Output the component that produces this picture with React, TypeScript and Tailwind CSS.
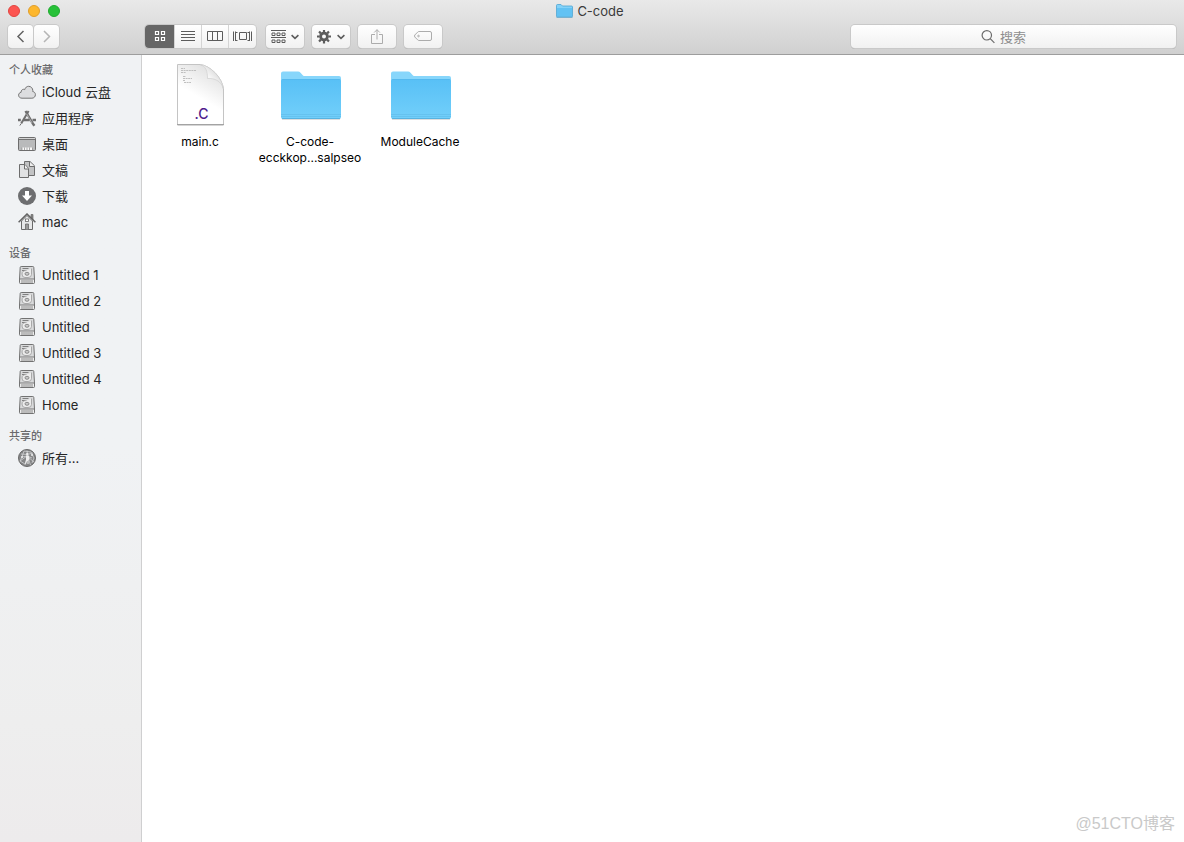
import React from "react";

const toolButton =
  "flex h-[23px] items-center justify-center rounded-[4px] bg-linear-to-b from-white to-[#f1f1f1] text-[#5c5c5c] shadow-[0_0_0_1px_#c9c9c9,0_1px_0_0_#a8a8a8]";

function Chevron() {
  return (
    <svg className="h-2 w-2" viewBox="0 0 8 8" fill="none" stroke="currentColor" strokeWidth="1.6" aria-hidden="true">
      <path d="M0.600 2.200 4 5.400 7.400 2.200" />
    </svg>
  );
}

function CloudIcon() {
  return (
    <svg className="h-[18px] w-[18px]" viewBox="0 0 18 18" aria-hidden="true">
      <path
        d="M4 15.200C2 15.200.6 13.900.6 12.200c0-1.600 1.100-2.700 2.500-2.900-.1-1.700 1-3 2.400-3 .5 0 .9.1 1.200.4C7.300 4.500 8.800 3.300 10.600 3.300c2.400 0 4.200 1.900 4.200 4.300 0 .3 0 .6-.1.900 1.600.2 2.700 1.500 2.700 3.200 0 2-1.500 3.500-3.500 3.500Z"
        fill="#dcdddf"
        stroke="#747474"
        strokeWidth="1"
      />
    </svg>
  );
}

function AppsIcon() {
  return (
    <svg className="h-[18px] w-[18px]" viewBox="0 0 18 18" fill="none" stroke="#6f6f6f" aria-hidden="true">
      <path d="M10.600 2 3.200 14.600" strokeWidth="2" />
      <path d="M3 14.800 1.800 16.600" strokeWidth="1" />
      <path d="M7.500 2 15 14.800l1.400 2" strokeWidth="2.400" />
      <path d="M8.600 4.800 14 14" stroke="#c9cacb" strokeWidth=".7" />
      <path d="M0 11h2.800M5.500 11h6.200M14.500 11H18" strokeWidth="2.400" />
    </svg>
  );
}

function DesktopIcon() {
  return (
    <svg className="h-[18px] w-[18px]" viewBox="0 0 18 18" aria-hidden="true">
      <rect x=".5" y="2.500" width="17" height="13" rx="1" fill="#b9babb" stroke="#6d6d6d" />
      <path d="M1 4.500h16" stroke="#737373" />
      <path d="M1 3.500h16" stroke="#dedede" strokeWidth=".7" />
      <path d="M4 12.500h10.500v2.500H4z" fill="#f8f8f8" />
      <path d="M4 12.500v2.500M6.500 12.500v2.500M9 12.500v2.500M11.500 12.500v2.500M14.500 12.500v2.500" stroke="#888" strokeWidth=".7" />
    </svg>
  );
}

function DocumentsIcon() {
  return (
    <svg className="h-[18px] w-[18px]" viewBox="0 0 18 18" fill="#e1e2e3" stroke="#6d6d6d" aria-hidden="true">
      <path d="M6.500 .5H12l4.500 4.300v9.700h-10z" fill="#c2c3c4" />
      <path d="M11.500 .8v4.700h5" fill="#eee" />
      <path d="M1.500 3.500H7l3.500 4V16.500h-9z" />
      <path d="M6.500 3.700v4.300h4" fill="#f3f3f3" />
    </svg>
  );
}

function DownloadsIcon() {
  return (
    <svg className="h-[18px] w-[18px]" viewBox="0 0 18 18" aria-hidden="true">
      <circle cx="9" cy="9" r="9" fill="#6d6e70" />
      <path d="M7 4h4v4.500h3L9 14 4 8.500h3z" fill="#fff" />
    </svg>
  );
}

function HomeIcon() {
  return (
    <svg className="h-[18px] w-[18px]" viewBox="0 0 18 18" aria-hidden="true">
      <path d="M3.500 8 9 2.500 14.500 8v8.500h-11z" fill="#e6e7e8" stroke="#696969" />
      <path d="M13 1.500h2v5.500l-2-2z" fill="#888" stroke="#696969" strokeWidth=".7" />
      <path d="M.6 9.300 9 1l8.400 8.300" fill="none" stroke="#646464" strokeWidth="1.500" />
      <rect x="7.500" y="6" width="3" height="2.500" fill="#fff" stroke="#666" strokeWidth=".8" />
      <path d="M7.500 16.500v-5.500h3v5.500" fill="#9a9a9a" stroke="#696969" strokeWidth=".8" />
    </svg>
  );
}

function DiskIcon() {
  return (
    <svg className="h-[18px] w-[18px]" viewBox="0 0 18 18" aria-hidden="true">
      <path d="M3.200 .5h11.600q.9 0 1 .9l.7 11.600v3.600q0 .9-.9.900H2.400q-.9 0-.9-.9V13l.7-11.600q.1-.9 1-.9Z" fill="#d9dadb" stroke="#727272" />
      <path d="M2 13h14v4H2z" fill="#ededed" />
      <path d="M1.500 13h15" stroke="#777" />
      <path d="M4 14v3M6 14v3M8 14v3M10 14v3M12 14v3M14 14v3" stroke="#808080" strokeWidth=".9" />
      <path d="M4.500 2.500h6M4 4.500h3" stroke="#808080" />
      <path d="M13.500 2.500v6q0 3-3.500 3H7q-3 0-3-3.500 0-3.500 4.500-3.500" fill="#ececec" stroke="#999" strokeWidth=".8" />
      <ellipse cx="9" cy="7.800" rx="2" ry="1.500" fill="#c9c9c9" stroke="#777" strokeWidth=".8" />
    </svg>
  );
}

function NetworkIcon() {
  return (
    <svg className="h-[18px] w-[18px]" viewBox="0 0 18 18" aria-hidden="true">
      <circle cx="9" cy="9" r="8.500" fill="#858687" stroke="#696969" />
      <g fill="none" stroke="#d9dadb" strokeWidth=".7">
        <path d="M3 5 9 5.500 15 4M2 12l7-5 7 6M9 1.500 9.500 7 7 16M9.500 7l3 9M6 2 4 8l-2 4 5 3M6 2l7 1 3 6-2 5M4 8l5-1 5 2" />
      </g>
      <g fill="#eee">
        <circle cx="9.300" cy="5" r="1.200" />
        <path d="M8 6.500h3l.5 4-1 .5v4H9.500v-3h-.5l-1 3-1-.5 1-3.500Z" />
        <circle cx="4" cy="8" r="1" />
        <circle cx="14" cy="6" r="1" />
      </g>
    </svg>
  );
}

function FolderIcon({ id }: { id: string }) {
  return (
    <svg className="h-16 w-16" viewBox="0 0 64 64" aria-hidden="true">
      <defs>
        <linearGradient id={id} x1="0" y1="0" x2="0" y2="1">
          <stop offset="0" stopColor="#58c0f6" />
          <stop offset="1" stopColor="#72cffa" />
        </linearGradient>
      </defs>
      <path d="M4 56.500h58" stroke="#000" strokeOpacity=".13" />
      <path d="M3 10.500Q3 8.500 5 8.500H20Q21.500 8.500 22.500 9.800L25 12.500Q25.500 13 27 13H61Q63 13 63 15V54H3Z" fill="#87d6fb" />
      <path d="M3 18q0-2 2-2h56q2 0 2 2v36q0 2-2 2H5q-2 0-2-2Z" fill={`url(#${id})`} />
      <path d="M4 16.500h58" stroke="#50afe3" strokeOpacity=".4" />
      <path d="M3 51.500h60M3 53.500h60" stroke="#58b4e2" strokeOpacity=".45" />
      <path d="M4 55.500h58" stroke="#4fa9d8" strokeOpacity=".75" />
    </svg>
  );
}

function SourceFileIcon() {
  return (
    <svg className="h-16 w-16" viewBox="0 0 64 64" aria-hidden="true">
      <defs>
        <linearGradient id="page" x1="0" y1="1" x2=".45" y2="0">
          <stop offset=".55" stopColor="#fff" />
          <stop offset="1" stopColor="#e4e4e4" />
        </linearGradient>
        <linearGradient id="curl" x1="0" y1="1" x2="1" y2="0">
          <stop offset=".1" stopColor="#fff" />
          <stop offset=".45" stopColor="#f6f6f6" />
          <stop offset="1" stopColor="#bdbdbd" />
        </linearGradient>
      </defs>
      <path d="M9.500 62.500h46" stroke="#888" strokeOpacity=".35" />
      <path d="M9.500 1.500H32C42 2.500 54 14 55.500 26V61.500h-46Z" fill="url(#page)" stroke="#c4c4c4" />
      <path d="M32 1.500C38 3.500 39.500 8 39.500 15.500c7-.5 14 2.500 16 10.500C54 14 42 2.500 32 1.500Z" fill="url(#curl)" stroke="#cfcfcf" strokeWidth=".7" />
      <path d="M9 61.500h47" stroke="#a3a3a3" />
      <path d="M13 5.500h4M13 7.500h15M13 9.500h5M15 13.500h3M15 15.500h9M15 17.500h2M16 19.500h7" stroke="#b9b9b9" strokeWidth=".9" strokeDasharray="2 .6" />
      <text x="26.500" y="56" fontFamily="Inter, sans-serif" fontWeight="500" fontSize="14" fill="#4f1c8c">.C</text>
    </svg>
  );
}

type Item = { name: string; icon: () => React.JSX.Element };

const sections: { title: string; items: Item[] }[] = [
  {
    title: "个人收藏",
    items: [
      { name: "iCloud 云盘", icon: CloudIcon },
      { name: "应用程序", icon: AppsIcon },
      { name: "桌面", icon: DesktopIcon },
      { name: "文稿", icon: DocumentsIcon },
      { name: "下载", icon: DownloadsIcon },
      { name: "mac", icon: HomeIcon },
    ],
  },
  {
    title: "设备",
    items: ["Untitled 1", "Untitled 2", "Untitled", "Untitled 3", "Untitled 4", "Home"].map((name) => ({
      name,
      icon: DiskIcon,
    })),
  },
  { title: "共享的", items: [{ name: "所有...", icon: NetworkIcon }] },
];

function TitleBar() {
  return (
    <div className="flex h-[22px] items-center px-2">
      <div className="flex flex-1 gap-2">
        <button aria-label="关闭" className="h-3 w-3 rounded-full border border-[#e2443f] bg-[#fc5551]" />
        <button aria-label="最小化" className="h-3 w-3 rounded-full border border-[#e09e2b] bg-[#fdb72d]" />
        <button aria-label="缩放" className="h-3 w-3 rounded-full border border-[#1fab2e] bg-[#27c138]" />
      </div>
      <h1 className="flex items-center gap-1 pr-1 text-[13px] leading-4 text-[#3a3a3a]">
        <svg className="h-4 w-[17px]" viewBox="0 0 17 16" aria-hidden="true">
          <path d="M.5 2.500q0-1 1-1h3.500l1.500 1.500h9q1 0 1 1v9.500H.5Z" fill="#83d2f9" stroke="#4da4d2" strokeWidth=".8" />
          <path d="M1 5h15v8.500H1z" fill="#62c2f3" />
          <path d="M.5 14.500h16" stroke="#4b9cc8" strokeOpacity=".7" />
        </svg>
        C-code
      </h1>
      <div className="flex-1" />
    </div>
  );
}

function Toolbar() {
  return (
    <div className="flex items-center px-2 pt-[3px] pb-[6px]">
      <div className="flex gap-px">
        <button aria-label="后退" className={`${toolButton} w-[25px]`}>
          <svg className="h-3.5 w-3.5" viewBox="0 0 14 14" fill="none" stroke="#626262" strokeWidth="1.500" aria-hidden="true">
            <path d="M9.500 1 4 6.500l5.500 5.500" />
          </svg>
        </button>
        <button aria-label="前进" className={`${toolButton} w-[25px]`}>
          <svg className="h-3.5 w-3.5" viewBox="0 0 14 14" fill="none" stroke="#b5b5b5" strokeWidth="1.500" aria-hidden="true">
            <path d="M4 1 9.500 6.500 4 12" />
          </svg>
        </button>
      </div>

      <div className="ml-[86px] flex h-[23px] divide-x divide-[#d4d4d4] overflow-hidden rounded-[4px] bg-linear-to-b from-white to-[#f1f1f1] text-[#5c5c5c] shadow-[0_0_0_1px_#c9c9c9,0_1px_0_0_#a8a8a8]">
        <button aria-label="图标视图" className="flex w-[30px] items-center justify-center bg-[#666] text-white">
          <svg className="h-3 w-3" viewBox="0 0 12 12" fill="none" stroke="currentColor" strokeWidth="1.200" aria-hidden="true">
            <path d="M1.500 .5h3v3h-3zM7.500 .5h3v3h-3zM1.500 6.500h3v3h-3zM7.500 6.500h3v3h-3z" />
          </svg>
        </button>
        <button aria-label="列表视图" className="flex w-[27px] items-center justify-center">
          <svg className="h-3 w-3.5" viewBox="0 0 14 12" stroke="currentColor" aria-hidden="true">
            <path d="M0 .5h14M0 3.500h14M0 6.500h14M0 9.500h14" />
          </svg>
        </button>
        <button aria-label="分栏视图" className="flex w-[27px] items-center justify-center">
          <svg className="h-3 w-4" viewBox="0 0 16 12" fill="none" stroke="currentColor" aria-hidden="true">
            <path d="M.5 .5h15v9H.5zM5.500 .5v9M10.500 .5v9" />
          </svg>
        </button>
        <button aria-label="Cover Flow 视图" className="flex w-[27px] items-center justify-center">
          <svg className="h-3 w-[19px] shrink-0" viewBox="0 0 19 12" fill="none" stroke="currentColor" aria-hidden="true">
            <path d="M.5 .5v9.500M18.500 .5v9.500M6.500 1.500h7v7h-7zM2.500 .5v9.500M16.500 .5v9.500M3 1.500h1.500M3 9.500h1.500M16 1.500h-1.500M16 9.500h-1.500" />
          </svg>
        </button>
      </div>

      <div className="ml-[10px] flex gap-2">
        <button aria-label="排列方式" className={`${toolButton} w-[38px] gap-1`}>
          <svg className="h-3.5 w-4" viewBox="0 0 16 14" fill="none" stroke="currentColor" aria-hidden="true">
            <path d="M0 .5h15M0 7.500h15" />
            <path d="M1 3h3v2.500H1zM6 3h3v2.500H6zM11 3h3v2.500h-3zM1 10h3v2.500H1zM6 10h3v2.500H6zM11 10h3v2.500h-3z" />
          </svg>
          <Chevron />
        </button>
        <button aria-label="操作" className={`${toolButton} w-[38px] gap-1.5`}>
          <svg className="h-3.5 w-3.5" viewBox="0 0 14 14" fill="none" stroke="currentColor" aria-hidden="true">
            <circle cx="7" cy="6.500" r="3.400" strokeWidth="2.800" />
            <path
              d="M7-.5v2.600M7 10.900v2.600M0 6.500h2.600M11.400 6.500H14M2.050 1.550l1.800 1.800M10.150 9.650l1.800 1.800M2.050 11.450l1.800-1.800M10.150 3.350l1.800-1.800"
              strokeWidth="2.200"
            />
          </svg>
          <Chevron />
        </button>
        <button aria-label="共享" className={`${toolButton} w-[38px]`}>
          <svg className="h-4 w-3" viewBox="0 0 12 16" fill="none" stroke="#acacac" aria-hidden="true">
            <path d="M4 5.500H.5v9h11v-9H8M6 10.500V.7M3.200 3.500 6 .7l2.800 2.800" />
          </svg>
        </button>
        <button aria-label="标记" className={`${toolButton} w-[38px]`}>
          <svg className="h-3 w-[18px]" viewBox="0 0 18 12" fill="none" stroke="#acacac" aria-hidden="true">
            <path d="M5 .5h11q1.500 0 1.500 1.500v6q0 1.500-1.500 1.500H5q-.8 0-1.300-.6L.8 6q-.6-1 0-2l2.900-2.900Q4.200 .5 5 .5Z" />
            <circle cx="4.500" cy="5" r=".8" />
          </svg>
        </button>
      </div>

      <label className="ml-auto flex h-[23px] w-[325px] cursor-text items-center justify-center gap-[5px] rounded-[4px] bg-linear-to-b from-white to-[#f1f1f1] shadow-[0_0_0_1px_#c9c9c9,0_1px_0_0_#a8a8a8]">
        <svg className="h-3.5 w-3.5" viewBox="0 0 14 14" fill="none" stroke="#6b6b6b" strokeWidth="1.200" aria-hidden="true">
          <circle cx="5.800" cy="5.300" r="4.700" />
          <path d="m9.200 8.700 4.200 4.200" />
        </svg>
        <input
          type="search"
          aria-label="搜索"
          placeholder="搜索"
          className="h-4 w-[46px] bg-transparent text-[13px] leading-4 text-[#333] outline-none placeholder:text-[#8e8e8e]"
        />
      </label>
    </div>
  );
}

function Sidebar() {
  return (
    <nav className="flex w-[142px] shrink-0 flex-col gap-[9px] border-r border-[#cfcfd0] bg-linear-to-b from-[#f0f2f4] from-50% via-[#eeeeee] via-85% to-[#edebec] pt-[6px]">
      {sections.map((section) => (
        <section key={section.title}>
          <h2 className="pl-[9px] text-[11px] leading-[18px] font-medium text-[#6a6a6c]">{section.title}</h2>
          <ul>
            {section.items.map(({ name, icon: Icon }) => (
              <li key={name}>
                <a href="#" className="flex h-[26px] items-center gap-[6px] pl-[18px] text-[13px] leading-[18px] text-[#262626]">
                  <Icon />
                  {name}
                </a>
              </li>
            ))}
          </ul>
        </section>
      ))}
    </nav>
  );
}

function FileTile({ icon, children }: { icon: React.ReactNode; children: React.ReactNode }) {
  return (
    <li className="flex w-[110px] flex-col items-center gap-[7px]">
      {icon}
      <span className="text-center text-[12px] leading-4 text-black">{children}</span>
    </li>
  );
}

export default function App() {
  return (
    <div className="flex min-h-screen flex-col bg-white font-['Inter','Noto_Sans_CJK_SC',sans-serif]">
      <header className="border-b border-[#9d9d9d] bg-linear-to-b from-[#e9e9e9] to-[#d0d0d0]">
        <TitleBar />
        <Toolbar />
      </header>
      <div className="flex flex-1">
        <Sidebar />
        <main className="relative flex-1 bg-white pt-2 pl-[3px]">
          <ul className="flex flex-wrap">
            <FileTile icon={<SourceFileIcon />}>main.c</FileTile>
            <FileTile icon={<FolderIcon id="folder-code" />}>
              C-code-
              <br />
              ecckkop...salpseo
            </FileTile>
            <FileTile icon={<FolderIcon id="folder-cache" />}>ModuleCache</FileTile>
          </ul>
          <p className="absolute right-[9px] bottom-1.5 font-['Liberation_Sans','Noto_Sans_CJK_SC',sans-serif] text-base leading-6 text-[#c9c9c9]">
            @51CTO博客
          </p>
        </main>
      </div>
    </div>
  );
}
